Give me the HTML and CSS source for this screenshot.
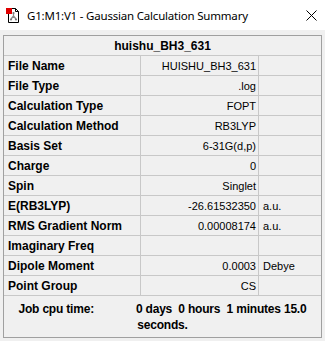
FILE: index.html
```html
<!DOCTYPE html>
<html>
<head>
<meta charset="utf-8">
<link rel="stylesheet" href="styles.css">
</head>
<body>
<div class="titlebar">
  <svg class="appicon" width="16" height="16" viewBox="0 0 16 16">
    <path d="M3.5 1.5 H10.5 L13.5 4.5 V15.5 H3.5 Z" fill="#fff" stroke="#000" stroke-width="1"/>
    <path d="M10.5 1.5 V4.5 H13.5" fill="none" stroke="#000" stroke-width="1"/>
    <rect x="1" y="1" width="6" height="6" fill="#e00000"/>
    <path d="M8.5 6 V9 M8.5 9 L6 12 M8.5 9 L11 12" stroke="#888" stroke-width="1.2" fill="none"/>
    <circle cx="8.5" cy="6" r="1.1" fill="#777"/>
    <circle cx="6" cy="12.5" r="1.1" fill="#777"/>
    <circle cx="11" cy="12.5" r="1.1" fill="#777"/>
  </svg>
  <span class="title">G1:M1:V1 - Gaussian Calculation Summary</span>
  <svg class="close" width="11" height="11" viewBox="0 0 11 11">
    <path d="M0.5 0.5 L10.5 10.5 M10.5 0.5 L0.5 10.5" stroke="#000" stroke-width="1"/>
  </svg>
</div>
<div class="panel">
  <div class="grid">
    <div class="cell head">huishu_BH3_631</div>

    <div class="cell label">File Name</div><div class="cell value">HUISHU_BH3_631</div><div class="cell unit"></div>
    <div class="cell label">File Type</div><div class="cell value">.log</div><div class="cell unit"></div>
    <div class="cell label">Calculation Type</div><div class="cell value">FOPT</div><div class="cell unit"></div>
    <div class="cell label">Calculation Method</div><div class="cell value">RB3LYP</div><div class="cell unit"></div>
    <div class="cell label">Basis Set</div><div class="cell value">6-31G(d,p)</div><div class="cell unit"></div>
    <div class="cell label">Charge</div><div class="cell value">0</div><div class="cell unit"></div>
    <div class="cell label">Spin</div><div class="cell value">Singlet</div><div class="cell unit"></div>
    <div class="cell label">E(RB3LYP)</div><div class="cell value">-26.61532350</div><div class="cell unit">a.u.</div>
    <div class="cell label">RMS Gradient Norm</div><div class="cell value">0.00008174</div><div class="cell unit">a.u.</div>
    <div class="cell label">Imaginary Freq</div><div class="cell value"></div><div class="cell unit"></div>
    <div class="cell label">Dipole Moment</div><div class="cell value">0.0003</div><div class="cell unit">Debye</div>
    <div class="cell label">Point Group</div><div class="cell value">CS</div><div class="cell unit"></div>

    <div class="cell foot">
      <div class="foot-line"><span class="foot-key">Job cpu time:</span><span class="foot-val">0 days  0 hours  1 minutes 15.0</span></div>
      <div class="foot-line">seconds.</div>
    </div>
  </div>
</div>
</body>
</html>
```
FILE: styles.css
```css
html, body {
  margin: 0;
  padding: 0;
  background: #f0f0f0;
  width: 325px;
  height: 341px;
  overflow: hidden;
}

.titlebar {
  height: 30px;
  background: #ffffff;
  display: flex;
  align-items: center;
}

.appicon {
  margin-left: 5px;
  flex: none;
}

.title {
  margin-left: 6px;
  font-family: "Noto Sans", "Open Sans", sans-serif;
  font-size: 11.5px;
  color: #000;
  white-space: nowrap;
  letter-spacing: -0.2px;
}

.close {
  margin-left: auto;
  margin-right: 8px;
  flex: none;
}

.panel {
  margin: 5px 0 0 3px;
  width: 317px;
  border: 1px solid #a0a0a0;
  background: #f0f0f0;
}

.grid {
  display: grid;
  grid-template-columns: 136px 117px 62px;
  grid-template-rows: repeat(13, 19px) 41px;
  gap: 1px;
  background: #c8c8c8;
  font-family: "Liberation Sans", Arial, sans-serif;
  color: #000;
}

.cell {
  background: #f0f0f0;
  display: flex;
  align-items: center;
  white-space: nowrap;
  overflow: hidden;
}

.head {
  grid-column: 1 / 4;
  justify-content: center;
  font-weight: bold;
  font-size: 12px;
}

.label {
  font-weight: bold;
  font-size: 12px;
  padding-left: 4px;
}

.value {
  justify-content: flex-end;
  font-size: 11px;
  padding-right: 2px;
}

.unit {
  font-size: 11px;
  padding-left: 4px;
}

.foot {
  grid-column: 1 / 4;
  flex-direction: column;
  align-items: center;
  justify-content: flex-start;
  padding-top: 5px;
  box-sizing: border-box;
  font-weight: bold;
  font-size: 12px;
  line-height: 16px;
  letter-spacing: -0.2px;
}

.foot-line {
  white-space: pre;
}

.foot-key {
  margin-right: 42px;
}
```
